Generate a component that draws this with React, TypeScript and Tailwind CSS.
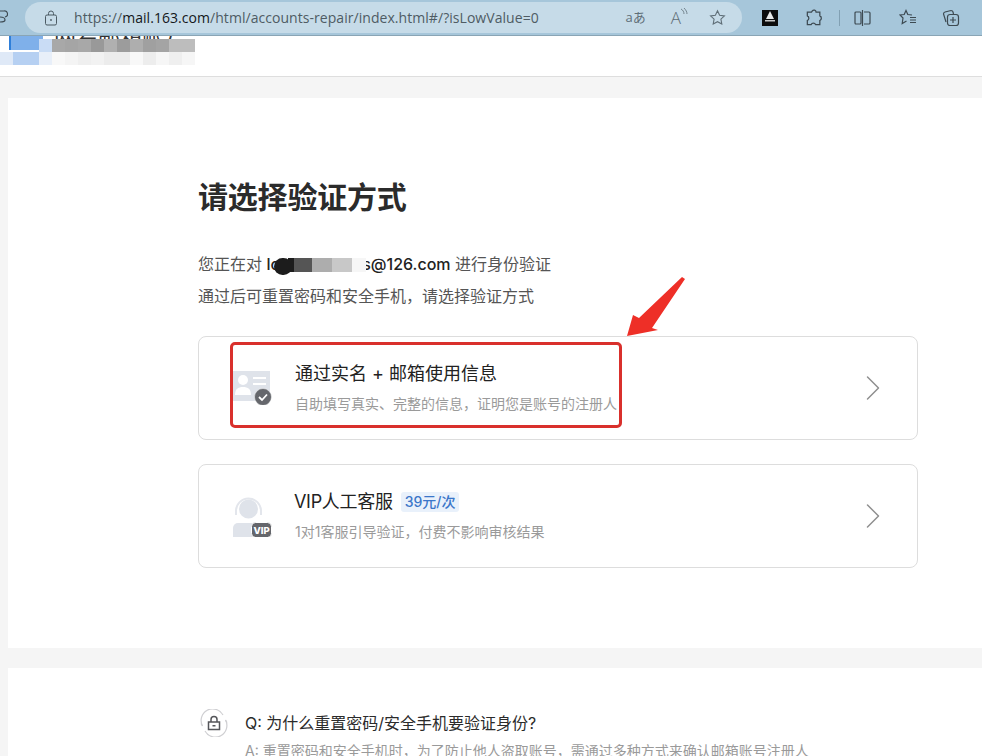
import { ChevronRight } from 'lucide-react'

const font = { fontFamily: '"Inter", "Noto Sans CJK SC", sans-serif' }

function IdIcon() {
  return (
    <svg width="40" height="34" viewBox="0 0 40 34" fill="none">
      <rect x="0" y="0" width="37" height="30" fill="#dfe3ea" />
      <circle cx="10" cy="9" r="5" fill="#fff" />
      <path d="M2 24c0-6 3-8 8-8s8 2 8 8z" fill="#fff" />
      <rect x="20" y="6" width="13" height="2" fill="#fff" />
      <rect x="20" y="12" width="13" height="2" fill="#fff" />
      <circle cx="30" cy="26" r="8.5" fill="#65676c" stroke="#fff" strokeWidth="0.5" />
      <path d="M26 26l3 3 5-5.5" stroke="#fff" strokeWidth="1.8" />
    </svg>
  )
}

function VipIcon() {
  return (
    <svg width="40" height="42" viewBox="0 0 40 42" fill="none">
      <path d="M3 20v-4a12.500 12.500 0 0 1 25 0v4" stroke="#e3e6ec" strokeWidth="2" />
      <circle cx="15.500" cy="14" r="9.500" fill="#dfe3ea" />
      <path d="M0 42v-9a5 5 0 0 1 5-5h18v14z" fill="#dfe3ea" />
      <rect x="18.500" y="27.500" width="20" height="15" rx="4" fill="#65676c" stroke="#fff" />
      <text x="28.500" y="38.500" textAnchor="middle" fontSize="9.500" fontWeight="800" fill="#fff" fontFamily="Inter">VIP</text>
    </svg>
  )
}

function LockCircle() {
  return (
    <svg width="28" height="28" viewBox="0 0 28 28" fill="none">
      <path d="M2.500 17A11.500 11.500 0 0 1 23 6" stroke="#cfcfd2" strokeWidth="1.200" />
      <path d="M25.500 11A11.500 11.500 0 0 1 5 22" stroke="#cfcfd2" strokeWidth="1.200" />
      <path d="M2.500 17l-1.500-2.500M25.500 11l1.500 2.500" stroke="#cfcfd2" strokeWidth="1.200" />
      <rect x="8.500" y="13" width="11" height="7.500" stroke="#55565a" strokeWidth="1.500" />
      <path d="M11 13v-2.500a3 3 0 0 1 6 0V13" stroke="#55565a" strokeWidth="1.500" />
      <rect x="12.500" y="16" width="3" height="1.500" fill="#55565a" />
    </svg>
  )
}

function Toolbar() {
  const stroke = '#3d4a52'
  return (
    <div className="flex h-[36px] items-center border-b border-[#8aa5b5] bg-[#a6c6da]">
      <svg width="8" height="16" viewBox="0 0 8 16" fill="none" className="mb-1 shrink-0">
        <path d="M0 3h4a3 3 0 0 1 1 6M0 9c3 0 5 1 5 3s-2 2-5 2" stroke={stroke} strokeWidth="1.200" />
      </svg>
      <div className="ml-[17px] flex h-[31px] w-[717px] items-center rounded-full bg-[#c6dbe8]">
        <svg width="14" height="16" viewBox="0 0 14 16" fill="none" className="ml-[19px]">
          <rect x="1.500" y="5" width="11" height="10" rx="1.500" stroke="#4b5a63" />
          <path d="M4.500 5V3.500a2.500 2.500 0 0 1 5 0V5" stroke="#4b5a63" />
          <circle cx="7" cy="10" r="0.900" fill="#4b5a63" />
        </svg>
        <span className="ml-[16px] text-[14px] tracking-[0.05px] text-[#4f5c64]" style={{ fontFamily: '"Open Sans", sans-serif' }}>
          https://<span className="text-[#14181b]">mail.163.com</span>/html/accounts-repair/index.html#/?isLowValue=0
        </span>
        <span className="ml-auto text-[13px] text-[#5f6e77]" style={{ fontFamily: '"Open Sans", "Noto Sans CJK JP", sans-serif' }}>aあ</span>
        <span className="relative ml-[25px] text-[17px] font-light leading-none text-[#5f6e77]" style={{ fontFamily: '"Open Sans", sans-serif' }}>
          A
          <svg width="8" height="10" viewBox="0 0 8 10" fill="none" className="absolute -right-[7px] -top-px">
            <path d="M1 1c2 1 3 3 3 5M4 0c2 2 3 4 3 6" stroke="#5f6e77" strokeWidth="0.800" />
          </svg>
        </span>
        <svg width="17" height="17" viewBox="0 0 24 24" fill="none" className="ml-[28px] mr-[16px]">
          <path d="M12 2.500l3 6.300 6.800.9-5 4.700 1.300 6.800-6.100-3.300-6.100 3.300 1.300-6.800-5-4.700 6.800-.9z" stroke="#5f6e77" strokeWidth="1.500" />
        </svg>
      </div>
      <div className="ml-[20px] flex h-[16px] w-[16px] items-start justify-center bg-[#0d0d0d]">
        <svg width="12" height="13" viewBox="0 0 12 13">
          <path d="M6 1l4 8H2z" fill="#e8e8e8" />
          <rect x="1" y="10" width="10" height="1.500" fill="#c9c9c9" />
        </svg>
      </div>
      <svg width="20" height="20" viewBox="0 0 24 24" fill="none" className="ml-[26px]">
        <path d="M10 3.500a2.500 2.500 0 0 1 4.500 1.500h4.500v4.500a3 3 0 0 1 0 5.500V20h-5a3 3 0 0 0-5.500 0H4v-5a3 3 0 0 0 0-5.500V5h5z" stroke={stroke} strokeWidth="1.500" />
      </svg>
      <div className="ml-[15px] h-[16px] w-px bg-[#81a0b3]" />
      <svg width="17" height="16" viewBox="0 0 17 16" fill="none" className="ml-[14px]">
        <rect x="1" y="2" width="6" height="12" rx="1" stroke={stroke} strokeWidth="1.200" />
        <path d="M10 2h5a1 1 0 0 1 1 1v10a1 1 0 0 1-1 1h-5M8.500 0v16" stroke={stroke} strokeWidth="1.200" />
      </svg>
      <svg width="18" height="17" viewBox="0 0 18 17" fill="none" className="ml-[28px]">
        <path d="M13 6L8.800 5.500 7 1.500 5.200 5.500 1 6l3 3-.8 5.500L7.500 12" stroke={stroke} strokeWidth="1.200" />
        <path d="M11 8.500h6M11 11h6M11 13.500h6" stroke={stroke} strokeWidth="1.200" />
      </svg>
      <svg width="18" height="18" viewBox="0 0 18 18" fill="none" className="ml-[25px]">
        <path d="M4 13L1.500 5A2 2 0 0 1 3 3l6-1.500A2 2 0 0 1 11 3l.5 2" stroke={stroke} strokeWidth="1.200" />
        <rect x="5.500" y="5.500" width="11" height="11" rx="2.500" stroke={stroke} strokeWidth="1.200" />
        <path d="M11 8v6M8 11h6" stroke={stroke} strokeWidth="1.200" />
      </svg>
    </div>
  )
}

const topMosaic = ['#a8a8a8', '#a5a5a5', '#a8a8a8', '#999999', '#b0b0b0', '#9c9c9c', '#aeaeae', '#a0a0a0', '#a4a4a4', '#bdbdbd', '#bdbdbd']
const lowMosaic = ['#f8f8f8', '#f4f4f4', '#efefef', '#f2f2f2', '#ececec', '#ececec', '#f8f8f8', '#ededed', '#f6f6f6', '#efefef', '#f6f6f6']

function Header() {
  return (
    <div className="relative h-[41px] overflow-hidden border-b border-[#dedede] bg-white">
      <div className="-mt-[13px] ml-[9px] flex items-start">
        <div className="h-[27px] w-[34px] border-l-2 border-[#2f7fd9] bg-[#7fb0ea]" />
        <span className="ml-[11px] text-[22px] leading-[26px] text-[#333]" style={font}>网易邮箱账号</span>
      </div>
      {/* mosaic over the account name */}
      <div className="absolute left-0 top-[3px]">
        <div className="ml-[39px] flex h-[13px]">
          <div className="w-[13px] bg-[#c9dcf5]" />
          {topMosaic.map((c, i) => <div key={i} className="w-[13px]" style={{ background: c }} />)}
        </div>
        <div className="flex h-[13px]">
          <div className="w-[13px] bg-[#dfe9f7]" />
          <div className="w-[26px] bg-[#b6d0f2]" />
          <div className="w-[13px] bg-[#e8eff9]" />
          {lowMosaic.map((c, i) => <div key={i} className="w-[13px]" style={{ background: c }} />)}
        </div>
      </div>
    </div>
  )
}

function OptionCard({ icon, title, desc, tag }: { icon: React.ReactNode; title: string; desc: string; tag?: string }) {
  return (
    <div className="flex h-[104px] items-center rounded-lg border border-[#dddddd] bg-white">
      <div className="ml-[34px] flex w-[62px] shrink-0">{icon}</div>
      <div className="flex-1">
        <div className="flex items-center text-[18px] leading-[26px] text-[#222]">
          <span className={tag ? '-ml-px tracking-[-0.3px]' : ''}>{title}</span>
          {tag && <span className="ml-2 rounded-[3px] bg-[#e9f1fb] px-1 text-[14px] font-medium leading-[20px] text-[#3b76c9]">{tag}</span>}
        </div>
        <div className="mt-[6px] text-[14px] leading-[22px] text-[#9a9a9a]">{desc}</div>
      </div>
      <ChevronRight className="mr-[22px] text-[#8f8f8f]" size={44} strokeWidth={0.8} />
    </div>
  )
}

export default function App() {
  return (
    <div className="relative h-[756px] w-[982px] overflow-hidden bg-[#f5f5f5]" style={font}>
      <Toolbar />
      <Header />

      <div className="ml-[8px] mt-[21px] h-[550px] bg-white pl-[190px] pr-[64px]">
        <h1 className="pt-[79px] text-[30px] font-bold leading-[40px] tracking-[-0.2px] text-[#2b2b2b]">请选择验证方式</h1>
        <div className="mt-[31px] text-[16px] leading-[32px] text-[#555]">
          <p>
            您正在对 <span className="font-medium text-[#222]">lo<span className="inline-block w-[82px]" />s@126.com</span> 进行身份验证
          </p>
          <p>通过后可重置密码和安全手机，请选择验证方式</p>
        </div>
        <div className="mt-[24px] flex flex-col gap-[24px]">
          <OptionCard icon={<IdIcon />} title="通过实名 + 邮箱使用信息" desc="自助填写真实、完整的信息，证明您是账号的注册人" />
          <OptionCard icon={<VipIcon />} title="VIP人工客服" tag="39元/次" desc="1对1客服引导验证，付费不影响审核结果" />
        </div>
      </div>

      <div className="ml-[8px] mt-[20px] flex h-[100px] gap-[17px] bg-white pl-[192px] pt-[41px]">
        <LockCircle />
        <div>
          <div className="text-[16px] leading-[28px] text-[#2b2b2b]">Q: 为什么重置密码/安全手机要验证身份?</div>
          <div className="mt-[2px] text-[14px] leading-[24px] text-[#9a9a9a]">A: 重置密码和安全手机时，为了防止他人盗取账号，需通过多种方式来确认邮箱账号注册人</div>
        </div>
      </div>

      {/* email redaction */}
      <div className="absolute left-[274px] top-[258px] flex h-[14px]">
        <div className="h-[17px] w-[18px] rounded-full bg-[#1c1c1c]" />
        <div className="-ml-[4px] w-[6px] bg-[#1c1c1c]" />
        <div className="w-[18px] bg-[#555]" />
        <div className="w-[20px] bg-[#adadad]" />
        <div className="w-[20px] bg-[#c8c8c8]" />
        <div className="w-[14px] bg-[#f6f6f6]" />
      </div>

      {/* red annotation */}
      <div className="absolute left-[230px] top-[342px] h-[86px] w-[392px] rounded-[5px] border-[3px] border-[#d9302c]" />
      <svg className="absolute left-[620px] top-[270px]" width="70" height="72" viewBox="0 0 70 72">
        <path d="M7 66L13 45 19 48 62 7 65 9 32 58 38 60z" fill="#ee2f27" />
      </svg>
    </div>
  )
}
